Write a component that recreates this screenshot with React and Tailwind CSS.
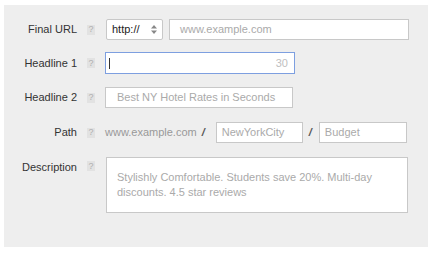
import React from 'react';

const Help = () => (
  <span className="flex h-[10px] w-[8px] items-center justify-center bg-[#e2e2e2] text-[9px] leading-none text-[#b0b0b0]">?</span>
);

const Label = ({ children, top }) => (
  <div className={`flex w-[83px] shrink-0 justify-end pr-[10px] text-[11px] text-[#333] ${top ? 'items-start pt-[2px]' : 'items-center'}`}>
    {children}
  </div>
);

const Row = ({ label, top, className = '', children }) => (
  <div className={`flex ${top ? 'items-start' : 'items-center'} ${className}`}>
    <Label top={top}>{label}</Label>
    <div className={`flex w-[18px] shrink-0 ${top ? 'pt-[4px]' : ''}`}>
      <Help />
    </div>
    {children}
  </div>
);

export default function App() {
  return (
    <div className="h-[254px] w-[436px] bg-white pl-[4px] pt-[5px]" style={{ fontFamily: '"Liberation Sans", Arial, sans-serif' }}>
      <div className="h-[242px] w-[424px] bg-[#eeeeee] pt-[14px]">
        <Row label="Final URL">
          <div className="ml-[1px] flex h-[21px] w-[57px] items-center justify-between rounded-[2px] border border-[#c8c8c8] bg-white pl-[5px] pr-[5px] text-[11px] text-[#222]">
            <span>http://</span>
            <svg width="6" height="9" viewBox="0 0 6 9">
              <path d="M3 0 L6 3.5 L0 3.5 Z M3 9 L6 5.5 L0 5.5 Z" fill="#888" />
            </svg>
          </div>
          <div className="ml-[6px] flex h-[21px] w-[240px] items-center border border-[#c8c8c8] bg-white pl-[10px] text-[11px] text-[#aaa]">
            www.example.com
          </div>
        </Row>

        <Row label="Headline 1" className="mt-[12px]">
          <div className="flex h-[22px] w-[190px] items-center justify-between border border-[#7d9fe0] bg-white pl-[3px] pr-[6px] text-[11px]">
            <span className="h-[11px] w-[1px] bg-[#333]"></span>
            <span className="text-[#c0c0c0]">30</span>
          </div>
        </Row>

        <Row label="Headline 2" className="mt-[13px]">
          <div className="flex h-[21px] w-[188px] items-center border border-[#c8c8c8] bg-white pl-[11px] text-[11px] text-[#aaa]">
            Best NY Hotel Rates in Seconds
          </div>
        </Row>

        <Row label="Path" className="mt-[14px]">
          <span className="text-[11px] text-[#999]">www.example.com</span>
          <span className="ml-[5px] text-[11px] font-bold italic text-[#555]">/</span>
          <div className="ml-[11px] flex h-[21px] w-[87px] items-center border border-[#c8c8c8] bg-white pl-[5px] text-[11px] text-[#aaa]">
            NewYorkCity
          </div>
          <span className="ml-[6px] text-[11px] font-bold italic text-[#555]">/</span>
          <div className="ml-[7px] flex h-[21px] w-[88px] items-center border border-[#c8c8c8] bg-white pl-[5px] text-[11px] text-[#aaa]">
            Budget
          </div>
        </Row>

        <Row label="Description" top className="mt-[14px]">
          <div className="ml-[1px] h-[56px] w-[302px] border border-[#c8c8c8] bg-white pl-[10px] pr-[8px] pt-[12px] text-[11px] leading-[15px] text-[#aaa]">
            Stylishly Comfortable. Students save 20%. Multi-day discounts. 4.5 star reviews
          </div>
        </Row>
      </div>
    </div>
  );
}
